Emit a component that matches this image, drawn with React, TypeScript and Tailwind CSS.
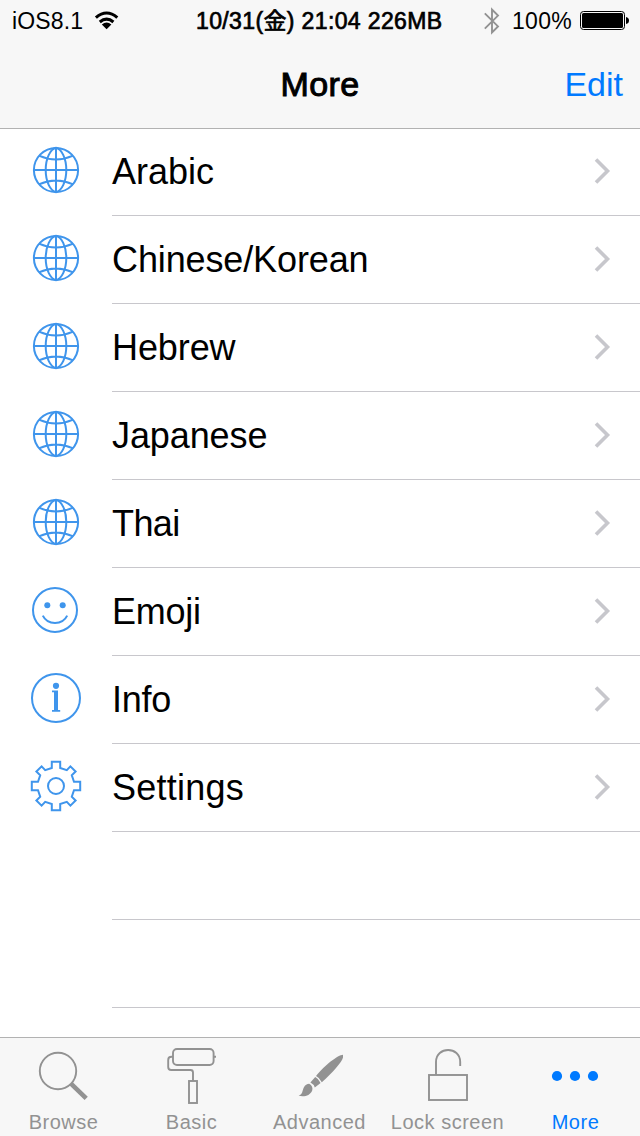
import type { ReactNode } from "react";

const iconBox = "h-14 w-14 shrink-0 fill-none stroke-[#3f95ec] stroke-[2]";

function Globe() {
  return (
    <svg viewBox="0 0 56 56" className={iconBox}>
      <circle cx="28" cy="28" r="22.1" />
      <path d="M28 5.8C22.5 7 17.7 16 17.7 28S22.5 49 28 50.2C33.5 49 38.3 40 38.3 28S33.5 7 28 5.8Z" />
      <path d="M28 5.8V50.2M5.8 28H50.2M10.9 13.6Q28 21.2 45.1 13.6M10.9 42.4Q28 34.8 45.1 42.4" />
    </svg>
  );
}

function Smile() {
  return (
    <svg viewBox="0 0 56 56" className={iconBox}>
      <circle cx="27" cy="28" r="22" />
      <circle cx="19.3" cy="23.2" r="3" className="fill-[#3f95ec] stroke-none" />
      <circle cx="34.7" cy="23.2" r="3" className="fill-[#3f95ec] stroke-none" />
      <path d="M14.8 33.6C19.6 43.4 34.4 43.4 39.2 33.6" />
    </svg>
  );
}

function Info() {
  return (
    <svg viewBox="0 0 56 56" className={iconBox}>
      <circle cx="28" cy="28" r="24" />
      <circle cx="28" cy="15.8" r="3.1" className="fill-[#3f95ec] stroke-none" />
      <path d="M24 20.4H30V40H32.2V41.7H24V40H26V22.2H24Z" className="fill-[#3f95ec] stroke-none" />
    </svg>
  );
}

function Gear() {
  return (
    <svg viewBox="0 0 56 56" className={iconBox}>
      <g transform="translate(28 28)">
        <path d="M-4.2-18V-24.2H4.2V-18L10.8-15.8L14.4-19.6L19.6-14.4L15.8-10.8L18-4.2H24.2V4.2H18L15.8 10.8L19.6 14.4L14.4 19.6L10.8 15.8L4.2 18V24.2H-4.2V18L-10.8 15.8L-14.4 19.6L-19.6 14.4L-15.8 10.8L-18 4.2H-24.2V-4.2H-18L-15.8-10.8L-19.6-14.4L-14.4-19.6L-10.8-15.8Z" />
        <circle r="8" />
      </g>
    </svg>
  );
}

type Row = { label: string; icon: ReactNode; spacing: string };

const rows: Row[] = [
  { label: "Arabic", icon: <Globe />, spacing: "tracking-[0px]" },
  { label: "Chinese/Korean", icon: <Globe />, spacing: "tracking-[-0.12px]" },
  { label: "Hebrew", icon: <Globe />, spacing: "tracking-[-0.1px]" },
  { label: "Japanese", icon: <Globe />, spacing: "tracking-[-0.1px]" },
  { label: "Thai", icon: <Globe />, spacing: "tracking-[-0.6px]" },
  { label: "Emoji", icon: <Smile />, spacing: "tracking-[-0.25px]" },
  { label: "Info", icon: <Info />, spacing: "tracking-[-0.25px]" },
  { label: "Settings", icon: <Gear />, spacing: "tracking-[0.25px]" },
];

const tabIcon = "h-[68px] w-32 fill-none stroke-[#929292] stroke-[1.9]";

const tabs: { label: string; icon: ReactNode; active?: boolean }[] = [
  {
    label: "Browse",
    icon: (
      <svg viewBox="0 0 128 68" className={tabIcon}>
        <circle cx="58" cy="33" r="18.2" />
        <path d="M71.2 45.8L86.2 60.4" strokeWidth="4.6" />
      </svg>
    ),
  },
  {
    label: "Basic",
    icon: (
      <svg viewBox="0 0 128 68" className={tabIcon}>
        <rect x="45" y="11" width="40.6" height="16" rx="4" />
        <path d="M86 18.8H88M45 18.8H43.5Q40.2 18.8 40.2 22V29Q40.2 32 43.2 32H62.5Q65 32 65 34.5V43" />
        <rect x="61" y="43" width="8" height="22" />
      </svg>
    ),
  },
  {
    label: "Advanced",
    icon: (
      <svg viewBox="0 0 128 68" className="h-[68px] w-32 fill-[#929292]">
        <path d="M87 16.8C82 17 69 27 60 38Q63.8 39.8 65.8 44.2C76.5 35 86 24 87 19.5Z" />
        <path d="M59.2 39.1Q63 41 64.6 45L58.8 49.4Q57.6 46.2 54.4 44.6Z" />
        <path d="M53.2 45.8Q57.4 48.2 56.2 52.5C54 57.8 48.6 59 42.6 57.8C47 56 46.1 52.8 47.8 49.5Q49.8 45.8 53.2 45.8Z" />
      </svg>
    ),
  },
  {
    label: "Lock screen",
    icon: (
      <svg viewBox="0 0 128 68" className={tabIcon}>
        <rect x="45" y="37" width="38" height="25" />
        <path d="M52 37V24C52 8 76.2 8 76.2 24V28" />
      </svg>
    ),
  },
  {
    label: "More",
    active: true,
    icon: (
      <svg viewBox="0 0 128 68" className="h-[68px] w-32 fill-[#007aff]">
        <circle cx="45" cy="38" r="5.1" />
        <circle cx="63" cy="38" r="5.1" />
        <circle cx="81" cy="38" r="5.1" />
      </svg>
    ),
  },
];

function StatusBar() {
  return (
    <div className="flex h-10 items-center pt-[2px] text-[23px] leading-6 whitespace-nowrap">
      <div className="flex w-[196px] items-center pl-3">
        <span className="w-[82px] tracking-[0.15px]">iOS8.1</span>
        <svg viewBox="0 0 26 20" className="-mt-[3px] h-5 w-[26px] fill-none stroke-black">
          <path d="M1.9 7.6Q12.6-1.6 23.3 7.6M5.8 12Q12.6 6.4 19.4 12" strokeWidth="3.1" />
          <path d="M7.8 14.6Q12.6 10.6 17.4 14.6L12.6 19.2Z" className="fill-black stroke-none" />
        </svg>
      </div>
      <div className="w-[288px] font-['Liberation_Sans','Noto_Sans_CJK_JP',sans-serif] tracking-[0.37px] [-webkit-text-stroke:0.7px_black]">
        10/31(金) 21:04 226MB
      </div>
      <svg viewBox="0 0 16 28" className="-mt-[1px] h-7 w-4 fill-none stroke-[#929292]">
        <path d="M.8 6.4L14 19.4L8 25.5V2.5L14 8.6L.8 21.6" strokeWidth="1.9" />
      </svg>
      <span className="ml-3 w-[68px] tracking-[0.3px]">100%</span>
      <svg viewBox="0 0 50 20" className="-mt-[1px] h-5 w-[50px]">
        <rect x=".5" y=".5" width="44" height="18" rx="3" className="fill-none stroke-black" />
        <rect x="2" y="2" width="41" height="15" rx="1.5" />
        <path d="M46 6Q49 6.5 49 9.5T46 13Z" />
      </svg>
    </div>
  );
}

export default function App() {
  return (
    <div className="flex h-[1136px] w-[640px] flex-col overflow-hidden bg-white font-['Liberation_Sans',sans-serif] text-black">
      <header className="relative z-10 h-[129px] shrink-0 border-b border-[#b2b2b2] bg-[#f7f7f7]">
        <StatusBar />
        <div className="grid h-[88px] grid-cols-3 items-center text-[34px]">
          <span />
          <h1 className="text-center tracking-[0.4px] [-webkit-text-stroke:1px_black]">More</h1>
          <span className="pr-[17px] text-right text-[#007aff]">Edit</span>
        </div>
      </header>

      <main className="-mt-px min-h-0 flex-1 overflow-hidden">
        {rows.map((row) => (
          <div key={row.label} className="flex h-[88px] pl-7">
            <div className="w-[84px] pt-[14px]">{row.icon}</div>
            <div className="flex flex-1 items-center justify-between border-b border-[#c8c7cc] pr-[29px]">
              <span className={`text-4xl ${row.spacing}`}>{row.label}</span>
              <svg viewBox="0 0 18 28" className="mb-[2px] h-7 w-[18px] fill-none stroke-[#c7c7cc]">
                <path d="M3 2.5L14.5 14L3 25.5" strokeWidth="3.6" />
              </svg>
            </div>
          </div>
        ))}
        <div className="ml-28 h-[88px] border-b border-[#c8c7cc]" />
        <div className="ml-28 h-[88px] border-b border-[#c8c7cc]" />
      </main>

      <nav className="flex h-[99px] shrink-0 border-t border-[#b2b2b2] bg-[#f7f7f7]">
        {tabs.map((tab) => (
          <div key={tab.label} className={tab.active ? "w-32 text-[#007aff]" : "w-32 text-[#929292]"}>
            {tab.icon}
            <div className="pt-1 pr-px text-center text-xl leading-6 tracking-[0.5px] whitespace-nowrap">{tab.label}</div>
          </div>
        ))}
      </nav>
    </div>
  );
}
